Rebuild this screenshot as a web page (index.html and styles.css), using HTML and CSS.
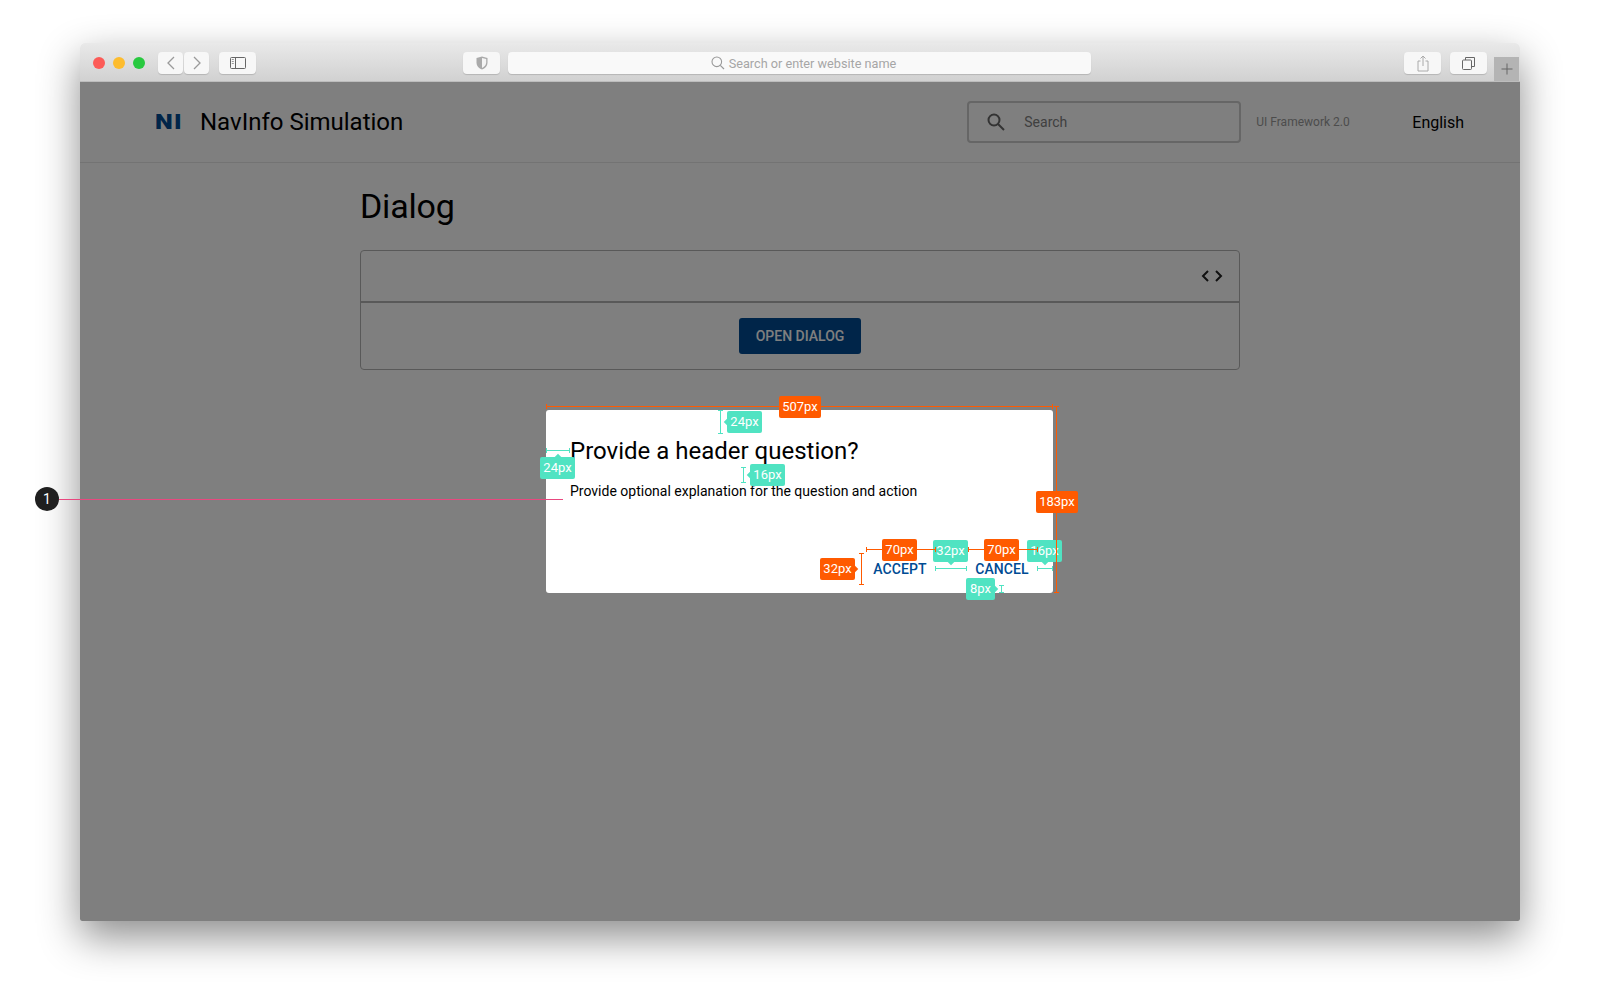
FILE: index.html
```html
<!DOCTYPE html>
<html lang="en">
<head>
    <meta charset="UTF-8">
    <meta name="viewport" content="width=device-width, initial-scale=1.0">
    <title>Dialog spec</title>
    <link rel="stylesheet" href="styles.css">
</head>
<body>
    <div class="browser">
        <div class="toolbar">
            <div class="lights">
                <span class="light red"></span>
                <span class="light yellow"></span>
                <span class="light green"></span>
            </div>
            <div class="nav-buttons">
                <div class="tool-btn nav-btn">
                    <svg width="10" height="14" viewBox="0 0 10 14"><path d="M8 1 2 7l6 6" fill="none" stroke="#9a9a9a" stroke-width="1.3"/></svg>
                </div>
                <div class="tool-btn nav-btn">
                    <svg width="10" height="14" viewBox="0 0 10 14"><path d="M2 1l6 6-6 6" fill="none" stroke="#9a9a9a" stroke-width="1.3"/></svg>
                </div>
            </div>
            <div class="tool-btn side-btn">
                <svg width="16" height="12" viewBox="0 0 16 12"><rect x=".5" y=".5" width="15" height="11" rx="1" fill="none" stroke="#666"/><path d="M5.5 0v12" stroke="#666"/><path d="M1.8 2.5h2M1.8 4.5h2M1.8 6.5h2" stroke="#999"/></svg>
            </div>
            <div class="tool-btn shield-btn">
                <svg width="12" height="14" viewBox="0 0 12 14"><path d="M6 .5 11.500 2v4.500c0 3.500-2.500 6-5.500 7-3-1-5.500-3.500-5.500-7V2z" fill="#aaa"/><path d="M6 2 10.200 3v3.500C10.200 9 8.300 11 6 12z" fill="#f4f4f4"/></svg>
            </div>
            <div class="url-bar">
                <svg width="14" height="14" viewBox="0 0 14 14"><circle cx="5.800" cy="5.800" r="4.800" fill="none" stroke="#999" stroke-width="1.100"/><path d="M9.300 9.300 13 13" stroke="#999" stroke-width="1.200"/></svg>
                <span>Search or enter website name</span>
            </div>
            <div class="tool-btn share-btn">
                <svg width="12" height="17" viewBox="0 0 12 17"><path d="M3.500 6H1v10h10V6H8.500" fill="none" stroke="#aaa"/><path d="M6 11V1M3.500 3.500 6 1l2.500 2.500" fill="none" stroke="#aaa"/></svg>
            </div>
            <div class="tool-btn tabs-btn">
                <svg width="13" height="13" viewBox="0 0 13 13"><rect x=".5" y="3" width="9" height="9.500" rx="1" fill="none" stroke="#666"/><path d="M3.500 3V.5h9v9H9.500" fill="none" stroke="#666"/></svg>
            </div>
            <div class="new-tab">
                <svg width="12" height="12" viewBox="0 0 12 12"><path d="M6 .5v11M.5 6h11" stroke="#666"/></svg>
            </div>
        </div>

        <div class="page">
            <header class="site-header">
                <div class="logo">NI</div>
                <div class="site-name">NavInfo Simulation</div>
                <div class="search-box">
                    <svg width="18" height="18" viewBox="0 0 18 18"><circle cx="7" cy="7" r="5.500" fill="none" stroke="#666" stroke-width="2"/><path d="M11 11l6 6" stroke="#666" stroke-width="2"/></svg>
                    <span>Search</span>
                </div>
                <div class="version">UI Framework 2.0</div>
                <div class="lang">English</div>
            </header>

            <main class="content">
                <h1>Dialog</h1>
                <div class="demo-card">
                    <div class="demo-top">
                        <svg width="22" height="12" viewBox="0 0 22 12"><path d="M7 1 2 6l5 5M15 1l5 5-5 5" fill="none" stroke="#222" stroke-width="2"/></svg>
                    </div>
                    <div class="demo-body">
                        <button class="open-btn" type="button">OPEN DIALOG</button>
                    </div>
                </div>
            </main>

            <div class="scrim"></div>

            <div class="dialog">
                <h2>Provide a header question?</h2>
                <p>Provide optional explanation for the question and action</p>
                <div class="dialog-actions">
                    <a class="dialog-btn">ACCEPT</a>
                    <a class="dialog-btn">CANCEL</a>
                </div>
            </div>
        </div>
    </div>

    <!-- redline annotations -->
    <div class="marker">1</div>
    <div class="pin-line"></div>

    <div class="rule orange h capped" id="r-width"></div>
    <div class="rule orange v capped" id="r-height"></div>
    <div class="rule orange h capped" id="r-accept"></div>
    <div class="rule orange h capped" id="r-cancel"></div>
    <div class="rule orange v capped" id="r-btn"></div>
    <div class="rule teal v capped" id="r-top"></div>
    <div class="rule teal h capped" id="r-left"></div>
    <div class="rule teal v capped" id="r-gap"></div>
    <div class="rule teal h capped" id="r-between"></div>
    <div class="rule teal h capped" id="r-right"></div>
    <div class="rule teal v capped" id="r-bottom"></div>

    <div class="tag orange" id="t-width">507px</div>
    <div class="tag orange" id="t-height">183px</div>
    <div class="tag orange" id="t-accept">70px</div>
    <div class="tag orange" id="t-cancel">70px</div>
    <div class="tag orange" id="t-btn">32px</div>
    <div class="tag teal" id="t-top">24px</div>
    <div class="tag teal" id="t-left">24px</div>
    <div class="tag teal" id="t-gap">16px</div>
    <div class="tag teal" id="t-between">32px</div>
    <div class="tag teal" id="t-right">16px</div>
    <div class="tag teal" id="t-bottom">8px</div>
</body>
</html>
```

FILE: styles.css
```css
html, body {
    margin: 0;
    padding: 0;
}

body {
    position: relative;
    width: 1600px;
    height: 1000px;
    overflow: hidden;
    background-color: #ffffff;
    font-family: Roboto, "Liberation Sans", sans-serif;
}

.browser {
    position: absolute;
    left: 80px;
    top: 43px;
    width: 1440px;
    height: 878px;
    border-radius: 5px 5px 2px 2px;
    overflow: hidden;
    display: flex;
    flex-direction: column;
    box-shadow: 0 16px 40px rgba(0, 0, 0, 0.45);
}

.toolbar {
    height: 39px;
    flex-shrink: 0;
    display: flex;
    align-items: flex-start;
    padding: 9px 0 0 13px;
    box-sizing: border-box;
    background: linear-gradient(#e9e9e9, #d1d1d1);
    border-bottom: 1px solid #bdbdbd;
}

.lights {
    display: flex;
    gap: 8px;
    margin-top: 5px;
}

.light {
    width: 12px;
    height: 12px;
    border-radius: 50%;
}

.red { background: #fc5b57; }
.yellow { background: #fdbc2e; }
.green { background: #28c93f; }

.tool-btn {
    height: 22px;
    background: #f7f7f7;
    border-radius: 4px;
    box-shadow: 0 1px 1px rgba(0, 0, 0, 0.15);
    display: flex;
    align-items: center;
    justify-content: center;
}

.nav-buttons {
    display: flex;
    gap: 1px;
    margin-left: 13px;
}

.nav-btn { width: 25px; }
.side-btn { width: 37px; margin-left: 10px; }
.shield-btn { width: 37px; margin-left: 207px; }

.url-bar {
    width: 583px;
    height: 22px;
    box-sizing: border-box;
    padding-left: 8px;
    margin-left: 8px;
    background: #f9f9f9;
    border-radius: 4px;
    box-shadow: 0 1px 1px rgba(0, 0, 0, 0.15);
    display: flex;
    align-items: center;
    justify-content: center;
    gap: 4px;
    color: #a6a6a6;
    font-size: 12.7px;
}

.share-btn { width: 37px; margin-left: 313px; }
.tabs-btn { width: 37px; margin-left: 9px; }

.new-tab {
    width: 25px;
    height: 24px;
    margin: 5px 0 0 7px;
    background: #b4b4b4;
    display: flex;
    align-items: center;
    justify-content: center;
}

.page {
    position: relative;
    flex: 1;
    background: #ffffff;
}

.site-header {
    height: 81px;
    box-sizing: border-box;
    display: flex;
    align-items: center;
    padding: 0 0 0 75px;
    border-bottom: 1px solid #e6e6e6;
}

.logo {
    width: 26px;
    font-size: 21px;
    font-weight: 900;
    letter-spacing: 1px;
    color: #004b93;
    transform: scaleX(1.2);
    transform-origin: left center;
}

.site-name {
    margin-left: 19px;
    font-size: 24px;
    color: #000;
}

.search-box {
    width: 274px;
    height: 42px;
    box-sizing: border-box;
    margin-left: 564px;
    border: 2px solid #cccccc;
    border-radius: 4px;
    display: flex;
    align-items: center;
    padding-left: 18px;
    gap: 19px;
    font-size: 14px;
    color: #808080;
}

.version {
    margin-left: 15px;
    width: 156px;
    font-size: 12px;
    color: #999;
}

.lang {
    font-size: 16px;
    color: #000;
}

.content {
    width: 880px;
    margin: 0 auto;
}

h1 {
    margin: 23px 0 0;
    font-size: 34px;
    font-weight: 400;
    line-height: 40px;
    letter-spacing: -0.2px;
    color: #000;
}

.demo-card {
    margin-top: 24px;
    height: 120px;
    box-sizing: border-box;
    border: 1px solid #b3b3b3;
    border-radius: 4px;
}

.demo-top {
    height: 52px;
    box-sizing: border-box;
    border-bottom: 2px solid #b3b3b3;
    display: flex;
    align-items: center;
    justify-content: flex-end;
    padding-right: 16px;
}

.demo-body {
    display: flex;
    justify-content: center;
    padding-top: 15px;
}

.open-btn {
    width: 122px;
    height: 36px;
    border: none;
    border-radius: 3px;
    background: #004b93;
    color: #fff;
    font-family: inherit;
    font-size: 14px;
    font-weight: 500;
}

.scrim {
    position: absolute;
    inset: 0;
    background: rgba(0, 0, 0, 0.5);
}

.dialog {
    position: absolute;
    left: 466px;
    top: 328px;
    width: 507px;
    height: 183px;
    box-sizing: border-box;
    padding: 27px 16px 8px 24px;
    background: #ffffff;
    border-radius: 3px;
    display: flex;
    flex-direction: column;
}

.dialog h2 {
    margin: 0;
    font-size: 24px;
    font-weight: 400;
    line-height: 28px;
    color: #000;
}

.dialog p {
    margin: 16px 0 0;
    font-size: 14px;
    line-height: 20px;
    color: #000;
}

.dialog-actions {
    margin-top: auto;
    display: flex;
    justify-content: flex-end;
    gap: 32px;
}

.dialog-btn {
    width: 70px;
    height: 32px;
    display: flex;
    align-items: center;
    justify-content: center;
    font-size: 14px;
    font-weight: 500;
    letter-spacing: 0.1px;
    color: #004b93;
}

/* annotations */
.marker {
    position: absolute;
    left: 35px;
    top: 487px;
    width: 24px;
    height: 24px;
    border-radius: 50%;
    background: #1f1f1f;
    color: #fff;
    font-size: 14px;
    line-height: 24px;
    text-align: center;
}

.pin-line {
    position: absolute;
    left: 59px;
    top: 499px;
    width: 504px;
    height: 1px;
    background: #e8487f;
}

.rule {
    position: absolute;
}

.rule.orange { background: #ff5a00; z-index: 2; }
.rule.teal { background: #50e3c2; }
.rule.h { height: 1px; }
.rule.v { width: 1px; }

.rule.h.capped::before, .rule.h.capped::after,
.rule.v.capped::before, .rule.v.capped::after {
    content: "";
    position: absolute;
    background: inherit;
}

.rule.h.capped::before { left: 0; top: -2px; width: 1px; height: 5px; }
.rule.h.capped::after { right: 0; top: -2px; width: 1px; height: 5px; }
.rule.v.capped::before { top: 0; left: -2px; width: 5px; height: 1px; }
.rule.v.capped::after { bottom: 0; left: -2px; width: 5px; height: 1px; }

#r-width { left: 546px; top: 406px; width: 507px; }
#r-height { left: 1056px; top: 406px; height: 187px; }
#r-accept { left: 866px; top: 549px; width: 70px; }
#r-cancel { left: 968px; top: 549px; width: 70px; }
#r-btn { left: 861px; top: 553px; height: 32px; }
#r-top { left: 720px; top: 410px; height: 24px; }
#r-left { left: 546px; top: 450px; width: 24px; }
#r-gap { left: 743px; top: 467px; height: 16px; }
#r-between { left: 935px; top: 568px; width: 32px; }
#r-right { left: 1037px; top: 568px; width: 16px; }
#r-bottom { left: 1001px; top: 585px; height: 8px; }

.tag {
    position: absolute;
    width: 35px;
    height: 22px;
    border-radius: 2px;
    color: #fff;
    font-size: 13px;
    line-height: 22px;
    text-align: center;
}

.tag.orange { background: #ff5a00; z-index: 3; }
.tag.teal { background: #50e3c2; }

.tag::after {
    content: "";
    position: absolute;
    width: 6px;
    height: 6px;
    background: inherit;
    transform: rotate(45deg);
}

#t-width { left: 779px; top: 396px; width: 42px; }
#t-width::after { display: none; }
#t-height { left: 1036px; top: 491px; width: 42px; }
#t-height::after { display: none; }
#t-accept { left: 882px; top: 539px; }
#t-accept::after { display: none; }
#t-cancel { left: 984px; top: 539px; }
#t-cancel::after { display: none; }
#t-btn { left: 820px; top: 558px; }
#t-btn::after { right: -2px; top: 8px; }
#t-top { left: 727px; top: 411px; }
#t-top::after { left: -2px; top: 8px; }
#t-left { left: 540px; top: 457px; }
#t-left::after { left: 15px; top: -2px; }
#t-gap { left: 750px; top: 464px; }
#t-gap::after { left: -2px; top: 8px; }
#t-between { left: 933px; top: 540px; }
#t-between::after { left: 15px; bottom: -2px; }
#t-right { left: 1027px; top: 540px; }
#t-right::after { left: 15px; bottom: -2px; }
#t-bottom { left: 966px; top: 578px; width: 29px; }
#t-bottom::after { right: -2px; top: 8px; }
```
